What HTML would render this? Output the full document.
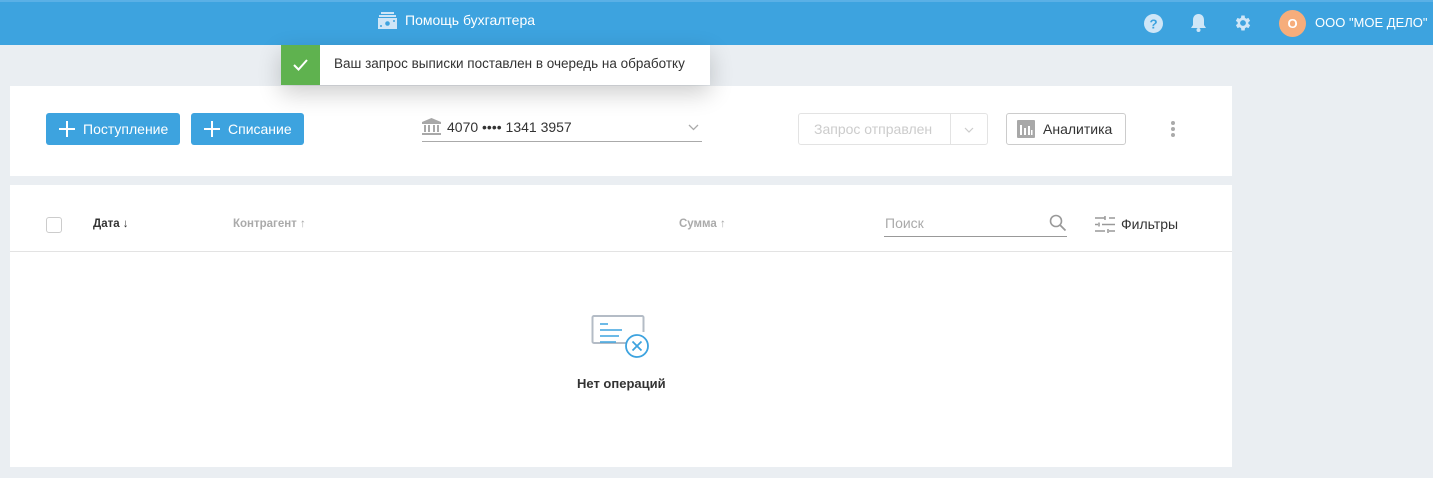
<!DOCTYPE html>
<html><head><meta charset="utf-8"><style>
*{box-sizing:border-box;margin:0;padding:0}
body{width:1433px;height:478px;background:#eaeef2;font-family:"Liberation Sans",sans-serif;position:relative;overflow:hidden;font-size:14px;color:#333}
.top{position:absolute;left:0;top:0;width:1433px;height:45px;background:#3da3df;border-top:2px solid #5ab0e6}
.abs{position:absolute}
.card{position:absolute;background:#fff;left:10px;width:1222px}
.btn{position:absolute;background:#3da3df;color:#fff;border-radius:3px;height:32px;top:113px;font-size:14px;line-height:32px}
</style></head><body>
<div class="top">
 <svg class="abs" style="left:378px;top:10px" width="19" height="18" viewBox="0 0 19 18"><rect x="3" y="0" width="13" height="2" fill="#cfe6f7"/><rect x="1" y="3" width="17" height="2" fill="#cfe6f7"/><rect x="0" y="6" width="19" height="11" fill="#cfe6f7"/><circle cx="9.5" cy="11.5" r="2.3" fill="#3da3df"/><circle cx="3" cy="14" r="1" fill="#3da3df"/><circle cx="16" cy="9" r="1" fill="#3da3df"/></svg>
 <div class="abs" style="left:405px;top:10px;color:#fff;font-size:14px">Помощь бухгалтера</div>
 <svg class="abs" style="left:1144px;top:12px" width="19" height="19" viewBox="0 0 20 20"><circle cx="10" cy="10" r="10" fill="#cfe6f7"/><text x="10" y="15" text-anchor="middle" font-size="14" font-weight="bold" fill="#3da3df" font-family="Liberation Sans">?</text></svg>
 <svg class="abs" style="left:1190px;top:11px" width="17" height="20" viewBox="0 0 17 20"><path d="M8.5 1c-3.5 0-5.5 2.6-5.5 6v5L1 15h15l-2-3V7c0-3.4-2-6-5.5-6z" fill="#cfe6f7"/><circle cx="8.5" cy="17" r="2" fill="#cfe6f7"/></svg>
 <svg class="abs" style="left:1233px;top:11px" width="20" height="20" viewBox="0 0 24 24"><path fill="#cfe6f7" d="M19.4 13a7.5 7.5 0 000-2l2.1-1.6-2-3.5-2.5 1a7 7 0 00-1.7-1L15 3h-4l-.4 2.9a7 7 0 00-1.7 1l-2.5-1-2 3.5L6.6 11a7.5 7.5 0 000 2l-2.1 1.6 2 3.5 2.5-1a7 7 0 001.7 1L11 21h4l.4-2.9a7 7 0 001.7-1l2.5 1 2-3.5zM13 15.5a3.5 3.5 0 110-7 3.5 3.5 0 010 7z" transform="translate(-1 0)"/></svg>
 <div class="abs" style="left:1279px;top:8px;width:27px;height:27px;border-radius:50%;background:#f6ad7b;color:#fff;font-weight:bold;text-align:center;line-height:27px;font-size:13px">О</div>
 <div class="abs" style="left:1315px;top:13px;color:#fff;font-size:13px">ООО "МОЕ ДЕЛО"</div>
</div>
<div class="card" style="top:86px;height:90px"></div>
<div class="abs" style="left:281px;top:45px;width:429px;height:40px;background:#fff;box-shadow:0 8px 24px rgba(0,0,0,.2)">
 <div class="abs" style="left:0;top:0;width:39px;height:40px;background:#5fb24f"></div>
 <svg class="abs" style="left:11px;top:13px" width="17" height="14" viewBox="0 0 17 14"><path d="M2 7l4.5 4.5L15 2" stroke="#fff" stroke-width="2" fill="none"/></svg>
 <div class="abs" style="left:53px;top:11px;font-size:13.5px;color:#333">Ваш запрос выписки поставлен в очередь на обработку</div>
</div>
<div class="btn" style="left:46px;width:134px"><svg class="abs" style="left:12px;top:7px" width="18" height="18"><path d="M9 1v16M1 9h16" stroke="#fff" stroke-width="2"/></svg><span class="abs" style="left:37px">Поступление</span></div>
<div class="btn" style="left:191px;width:113px"><svg class="abs" style="left:12px;top:7px" width="18" height="18"><path d="M9 1v16M1 9h16" stroke="#fff" stroke-width="2"/></svg><span class="abs" style="left:37px">Списание</span></div>
<svg class="abs" style="left:422px;top:118px" width="19" height="17" viewBox="0 0 19 17"><path d="M9.5 0L0 4v2h19V4z" fill="#a8a8a8"/><rect x="2" y="7" width="2" height="7" fill="#a8a8a8"/><rect x="6" y="7" width="2" height="7" fill="#a8a8a8"/><rect x="11" y="7" width="2" height="7" fill="#a8a8a8"/><rect x="15" y="7" width="2" height="7" fill="#a8a8a8"/><rect x="0" y="15" width="19" height="2" fill="#a8a8a8"/></svg>
<div class="abs" style="left:447px;top:119px;font-size:14px;color:#333">4070 •••• 1341 3957</div>
<svg class="abs" style="left:688px;top:124px" width="11" height="7"><path d="M1 1l4.5 4.5L10 1" stroke="#aaa" stroke-width="1.3" fill="none"/></svg>
<div class="abs" style="left:422px;top:141px;width:280px;height:1px;background:#aaa"></div>
<div class="abs" style="left:798px;top:113px;width:190px;height:32px;border:1px solid #e3e3e3;border-radius:3px"></div>
<div class="abs" style="left:950px;top:114px;width:1px;height:30px;background:#e3e3e3"></div>
<div class="abs" style="left:814px;top:121px;color:#ccc;font-size:14px">Запрос отправлен</div>
<svg class="abs" style="left:964px;top:127px" width="10" height="6"><path d="M1 1l4 4 4-4" stroke="#ccc" stroke-width="1.2" fill="none"/></svg>
<div class="abs" style="left:1006px;top:113px;width:120px;height:32px;border:1px solid #ccc;border-radius:3px"></div>
<svg class="abs" style="left:1017px;top:120px" width="18" height="18" viewBox="0 0 18 18"><rect width="18" height="18" rx="1" fill="#a8a8a8"/><rect x="3" y="5" width="2" height="10" fill="#fff"/><rect x="7" y="8" width="2" height="7" fill="#fff"/><rect x="11" y="6" width="2" height="9" fill="#fff"/><rect x="14" y="10" width="1.5" height="5" fill="#fff"/></svg>
<div class="abs" style="left:1043px;top:121px;font-size:14px;color:#333">Аналитика</div>
<div class="abs" style="left:1171px;top:121px;width:4px;height:4px;border-radius:50%;background:#aaa;box-shadow:0 6px 0 #aaa,0 12px 0 #aaa"></div>
<div class="card" style="top:185px;height:282px"></div>
<div class="abs" style="left:46px;top:217px;width:16px;height:16px;border:1px solid #ccc;border-radius:3px"></div>
<div class="abs" style="left:93px;top:218px;font-size:11.5px;font-weight:bold;color:#333">Дата ↓</div>
<div class="abs" style="left:233px;top:218px;font-size:11.5px;font-weight:bold;color:#aaa">Контрагент ↑</div>
<div class="abs" style="left:679px;top:218px;font-size:11.5px;font-weight:bold;color:#aaa">Сумма ↑</div>
<div class="abs" style="left:885px;top:215px;font-size:14px;color:#aaa">Поиск</div>
<svg class="abs" style="left:1049px;top:214px" width="18" height="18" viewBox="0 0 18 18"><circle cx="7" cy="7" r="5.5" stroke="#999" stroke-width="1.6" fill="none"/><path d="M11 11l5.5 5.5" stroke="#999" stroke-width="1.8"/></svg>
<div class="abs" style="left:884px;top:236px;width:183px;height:1px;background:#999"></div>
<svg class="abs" style="left:1095px;top:216px" width="20" height="17" viewBox="0 0 20 17"><g stroke="#999" stroke-width="1.5"><path d="M0 2h10M14 2h6M10 0v4M0 8.5h3M7 8.5h13M4 6.5v4M0 15h10M14 15h6M13 13v4"/></g></svg>
<div class="abs" style="left:1121px;top:216px;font-size:14px;color:#333">Фильтры</div>
<div class="abs" style="left:10px;top:251px;width:1222px;height:1px;background:#e3e3e3"></div>
<svg class="abs" style="left:591px;top:314px" width="60" height="46" viewBox="0 0 60 46"><path d="M36 29H3a1.5 1.5 0 01-1.5-1.5v-24A1.5 1.5 0 013 2h48a1.5 1.5 0 011.5 1.5V18" stroke="#b4bcc6" stroke-width="2" fill="none"/><g stroke="#3da3df" stroke-width="1.6"><path d="M9 10h8M9 16h22M9 22h19M9 28h16"/></g><circle cx="46" cy="32" r="11" stroke="#3da3df" stroke-width="1.8" fill="#fff"/><path d="M41.5 27.5l9 9M50.5 27.5l-9 9" stroke="#3da3df" stroke-width="1.8"/></svg>
<div class="abs" style="left:577px;top:376px;font-size:13px;font-weight:bold;color:#333">Нет операций</div>
</body></html>
